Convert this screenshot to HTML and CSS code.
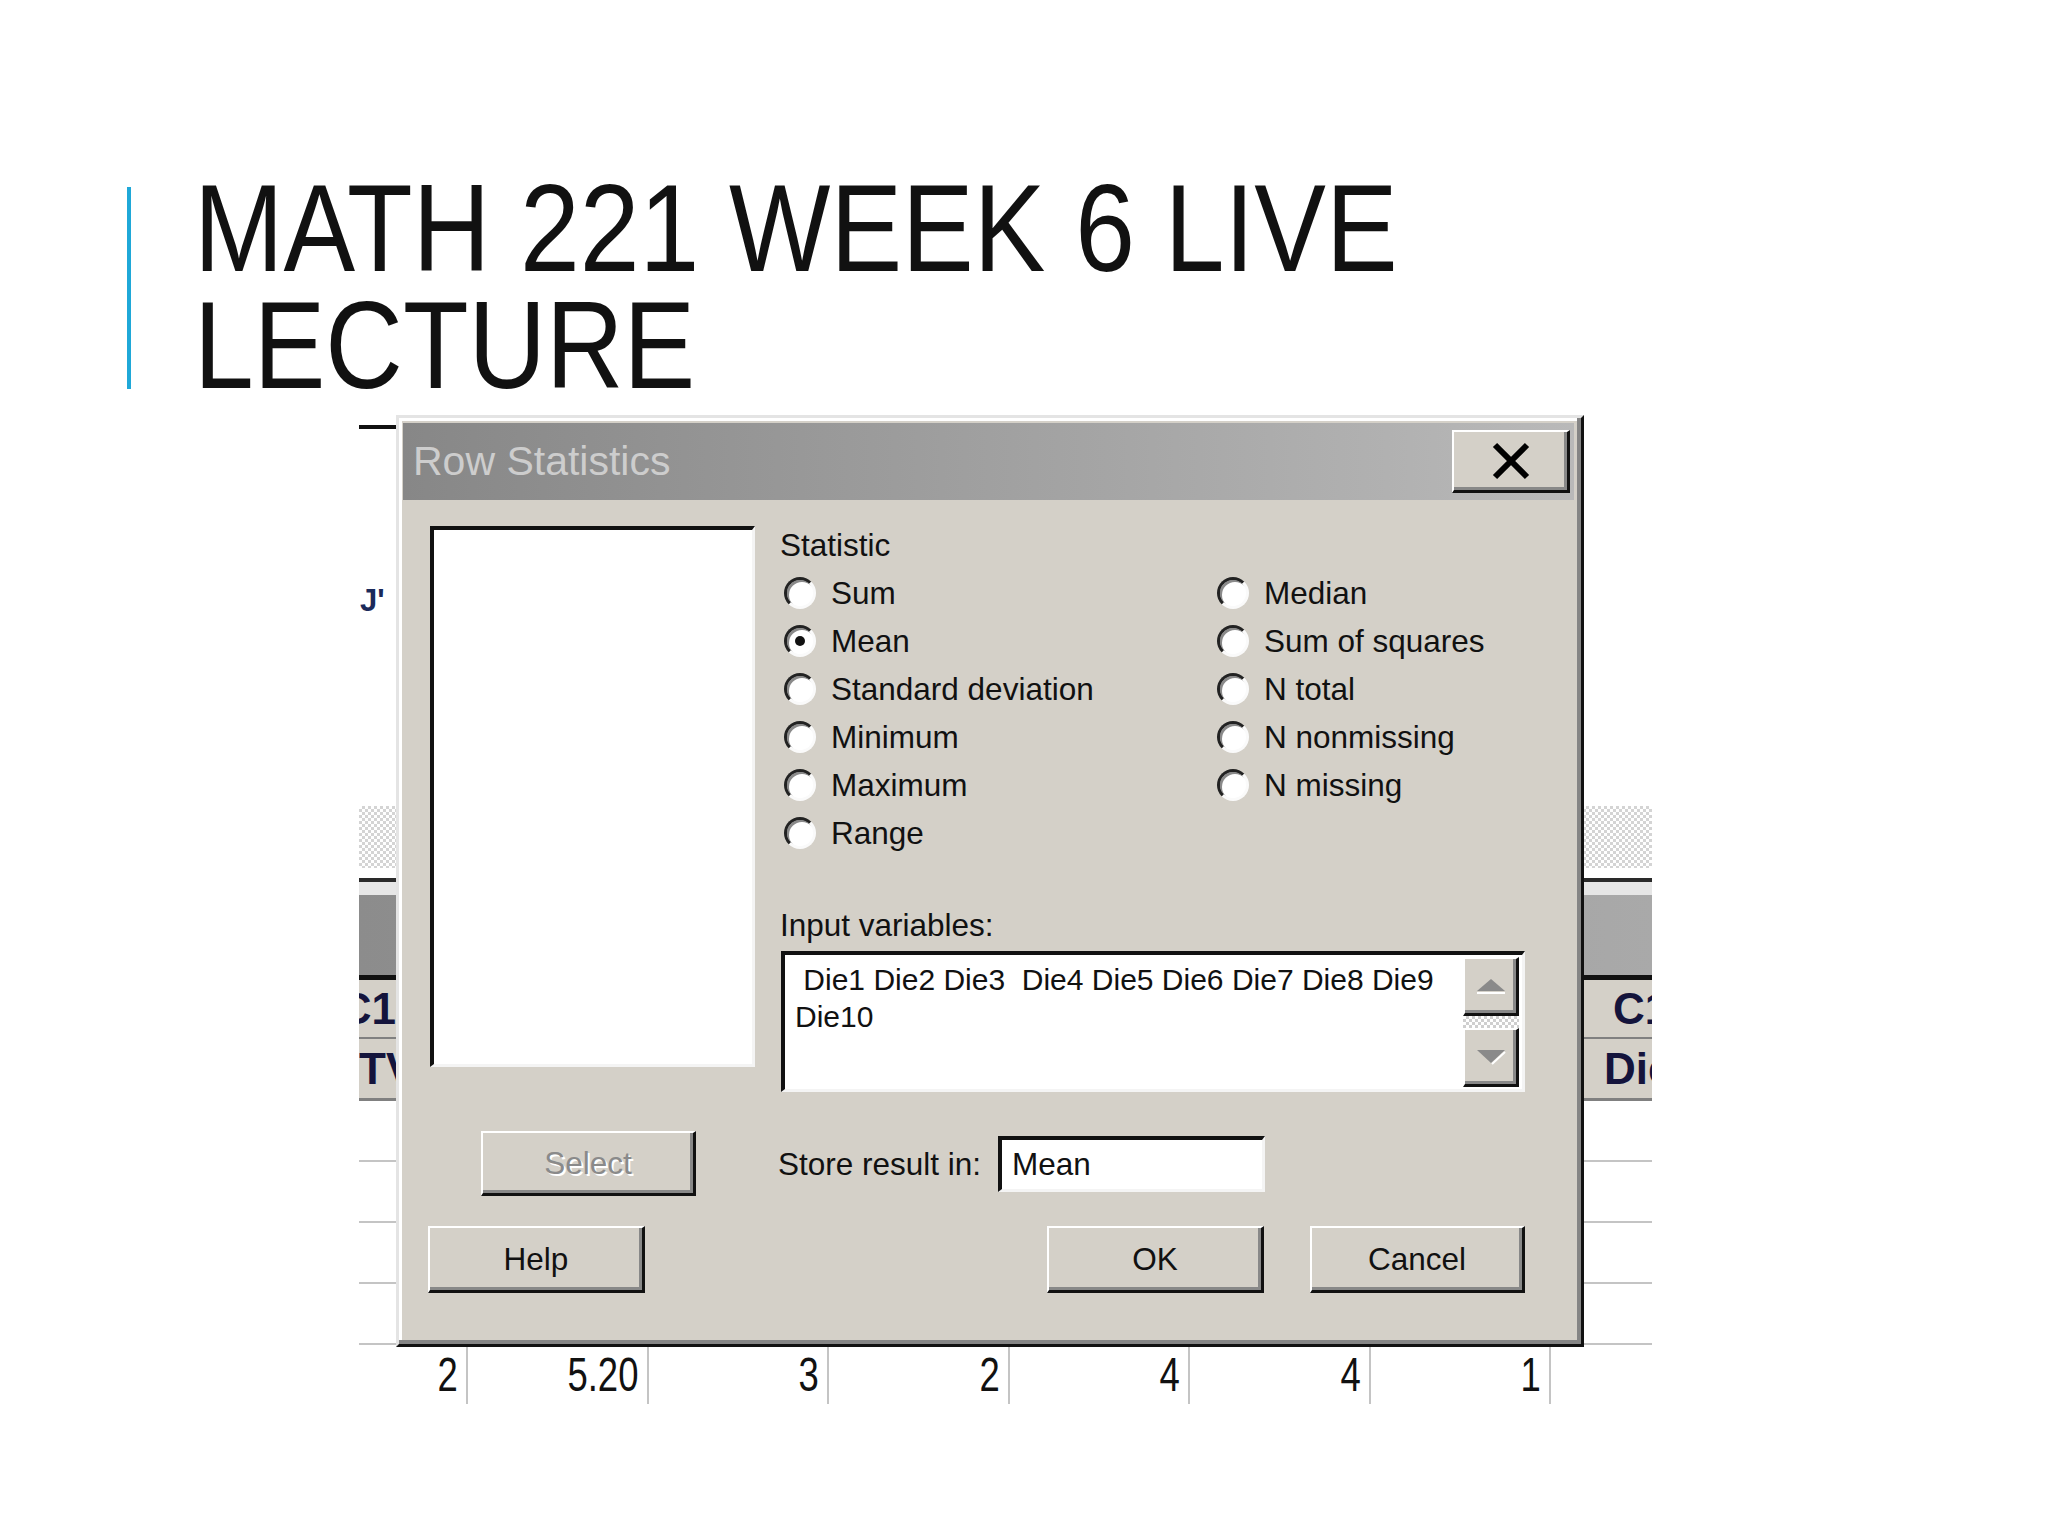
FILE: index.html
```html
<!DOCTYPE html>
<html lang="en">
<head>
    <meta charset="UTF-8">
    <title>MATH 221 Week 6 Live Lecture</title>
    <link rel="stylesheet" href="styles.css">
</head>
<body>
<div class="slide">
    <header class="title-block">
        <div class="accent"></div>
        <h1>MATH 221 WEEK 6 LIVE<br>LECTURE</h1>
    </header>

    <div class="shot">
        <!-- worksheet behind the dialog -->
        <div class="ws">
            <div class="ws-top">
                <div class="ws-rule"></div>
                <div class="ws-note">J'</div>
            </div>
            <div class="ws-checker"></div>
            <div class="ws-bar"><div class="ws-bar-fill"></div></div>
            <div class="ws-head ws-head-1"><span class="cell-l">C1</span><span class="cell-r">C1</span></div>
            <div class="ws-head ws-head-2"><span class="cell-l">TV</span><span class="cell-r">Die</span></div>
            <div class="ws-row"></div>
            <div class="ws-row"></div>
            <div class="ws-row"></div>
            <div class="ws-row"></div>
            <div class="ws-data">
                <span><i class="num">2</i></span>
                <span><i class="num">5.20</i></span>
                <span><i class="num">3</i></span>
                <span><i class="num">2</i></span>
                <span><i class="num">4</i></span>
                <span><i class="num">4</i></span>
                <span><i class="num">1</i></span>
            </div>
        </div>

        <!-- Row Statistics dialog -->
        <div class="dialog">
            <div class="dlg-title">
                <span class="dlg-caption">Row Statistics</span>
                <div class="dlg-close">
                    <svg width="40" height="40" viewBox="0 0 40 40"><path d="M4 4 L36 36 M36 4 L4 36" stroke="#000" stroke-width="6" fill="none"/></svg>
                </div>
            </div>
            <div class="dlg-body">
                <div class="dlg-main">
                    <div class="listbox"></div>
                    <div class="dlg-panel">
                        <div class="label label-stat">Statistic</div>
                        <div class="radios">
                            <div class="radio-item"><span class="radio"></span>Sum</div>
                            <div class="radio-item"><span class="radio checked"></span>Mean</div>
                            <div class="radio-item"><span class="radio"></span>Standard deviation</div>
                            <div class="radio-item"><span class="radio"></span>Minimum</div>
                            <div class="radio-item"><span class="radio"></span>Maximum</div>
                            <div class="radio-item"><span class="radio"></span>Range</div>
                            <div class="radio-item"><span class="radio"></span>Median</div>
                            <div class="radio-item"><span class="radio"></span>Sum of squares</div>
                            <div class="radio-item"><span class="radio"></span>N total</div>
                            <div class="radio-item"><span class="radio"></span>N nonmissing</div>
                            <div class="radio-item"><span class="radio"></span>N missing</div>
                        </div>
                        <div class="label label-input">Input variables:</div>
                        <div class="varbox">
                            <div class="varbox-text"> Die1 Die2 Die3  Die4 Die5 Die6 Die7 Die8 Die9
Die10</div>
                            <div class="vscroll">
                                <div class="sbtn">
                                    <svg width="32" height="20" viewBox="0 0 32 20"><polygon points="16,3 30,15 2,15" fill="#8a8a8a"/><rect x="2" y="16" width="28" height="2" fill="#fff"/></svg>
                                </div>
                                <div class="strack"></div>
                                <div class="sbtn">
                                    <svg width="32" height="20" viewBox="0 0 32 20"><polygon points="2,3 30,3 16,16" fill="#8a8a8a"/><path d="M17 17 L30 5" stroke="#fff" stroke-width="2"/></svg>
                                </div>
                            </div>
                        </div>
                    </div>
                </div>

                <div class="dlg-row dlg-row-store">
                    <div class="select-cell"><div class="btn btn-select">Select</div></div>
                    <span class="label">Store result in:</span>
                    <div class="textbox">Mean</div>
                </div>

                <div class="dlg-row dlg-row-actions">
                    <div class="btn btn-help">Help</div>
                    <div class="btn-group">
                        <div class="btn btn-ok">OK</div>
                        <div class="btn btn-cancel">Cancel</div>
                    </div>
                </div>
            </div>
        </div>
    </div>
</div>
</body>
</html>
```

FILE: styles.css
```css
body {
    margin: 0;
    background: #ffffff;
    font-family: "Liberation Sans", Arial, sans-serif;
}
.slide {
    width: 2048px;
    height: 1536px;
    overflow: hidden;
}

/* Slide title */
.title-block {
    display: flex;
    align-items: flex-start;
    padding: 170px 0 0 127px;
    height: 222px;
}
.accent {
    width: 4px;
    height: 202px;
    margin-top: 17px;
    background: #1fa8d8;
}
.title-block h1 {
    margin: 0 0 0 63px;
    font-size: 124px;
    line-height: 117px;
    font-weight: normal;
    color: #111111;
    white-space: nowrap;
    transform: scaleX(0.866); /* condensed heading face */
    transform-origin: left top;
}

/* Screenshot area */
.shot {
    margin-left: 359px;
    width: 1293px;
    height: 1012px;
    position: relative;
}
.ws {
    height: 100%;
    overflow: hidden;
    background: #ffffff;
}
.ws-top {
    height: 414px;
    box-sizing: border-box;
    padding-top: 33px;
}
.ws-rule {
    width: 37px;
    height: 4px;
    background: #111111;
}
.ws-note {
    margin-top: 157px;
    padding-left: 1px;
    font-size: 31px;
    line-height: 30px;
    font-weight: bold;
    color: #1b2a5a;
}
.ws-checker {
    height: 62px;
    background: repeating-conic-gradient(#d4d4d4 0 25%, #ffffff 0 50%) 0 0 / 6px 6px;
}
.ws-bar {
    margin-top: 10px;
    padding-top: 13px;
    border-top: 4px solid #2a2a2a;
    border-bottom: 5px solid #111111;
    background: #e6e6e6;
}
.ws-bar-fill {
    height: 80px;
    background: linear-gradient(90deg, #8c8c8c, #a9a9a9);
}
.ws-head {
    display: flex;
    justify-content: space-between;
    background: #d4d0c8;
    font-size: 44px;
    font-weight: bold;
    color: #14143c;
}
.ws-head-1 {
    height: 57px;
    border-bottom: 2px solid #808080;
}
.ws-head-2 {
    height: 59px;
    border-bottom: 3px solid #808080;
}
.cell-l,
.cell-r {
    display: flex;
    align-items: center;
    overflow: hidden;
    white-space: nowrap;
    box-sizing: border-box;
}
.cell-l {
    width: 37px;
}
.cell-r {
    width: 68px;
}
.ws-head-1 .cell-l {
    justify-content: flex-end;
    padding-right: 0;
}
.ws-head-1 .cell-r {
    padding-left: 29px;
}
.ws-head-2 .cell-r {
    padding-left: 20px;
}
.ws-row {
    height: 59px;
    border-bottom: 2px solid #c4c4c4;
}
.ws-data {
    display: flex;
    height: 59px;
    font-size: 48px;
    color: #111111;
}
.ws-data span {
    flex-shrink: 0;
    width: 180.5px;
    box-sizing: border-box;
    border-right: 2px solid #c4c4c4;
    padding-right: 8px;
    text-align: right;
    line-height: 59px;
}
.ws-data span:first-child {
    width: 109px;
}
.num {
    display: inline-block;
    font-style: normal;
    transform: scaleX(0.76);
    transform-origin: right center;
}

/* Dialog window */
.dialog {
    position: absolute;
    left: 37px;
    top: 23px;
    width: 1188px;
    height: 932px;
    box-sizing: border-box;
    padding: 5px 7px 0 4px;
    background: #d4d0c8;
    border: 3px solid;
    border-color: #e4e4e4 #111111 #111111 #e4e4e4;
    box-shadow: inset -4px -4px 0 #858585, inset 3px 3px 0 #ffffff;
    font-size: 31.5px;
    color: #111111;
}
.dlg-title {
    height: 77px;
    display: flex;
    align-items: center;
    justify-content: space-between;
    padding: 0 4px 0 10px;
    background: linear-gradient(90deg, #878787, #b9b9b9);
}
.dlg-caption {
    font-size: 41px;
    color: #cdcdcd;
}
.dlg-close {
    width: 118px;
    height: 63px;
    box-sizing: border-box;
    display: flex;
    align-items: center;
    justify-content: center;
    background: #d4d0c8;
    border-style: solid;
    border-width: 2px 3px 3px 2px;
    border-color: #ffffff #111111 #111111 #ffffff;
    box-shadow: inset -3px -3px 0 #888888;
}

.dlg-body {
    padding: 26px 49px 0 27px;
}
.dlg-main {
    display: flex;
    gap: 25px;
    height: 566px;
}
.listbox {
    width: 325px;
    height: 541px;
    box-sizing: border-box;
    background: #ffffff;
    border-style: solid;
    border-width: 4px 3px 3px 4px;
    border-color: #111111 #f4f4f4 #f4f4f4 #111111;
}
.dlg-panel {
    flex: 1;
}
.label {
    line-height: 36px;
}
.label-stat {
    margin-top: 1px;
}
.radios {
    display: grid;
    grid-template-columns: 433px 1fr;
    grid-template-rows: repeat(6, 48px);
    grid-auto-flow: column;
    margin-top: 6px;
    padding-left: 4px;
}
.radio-item {
    display: flex;
    align-items: center;
    gap: 15px;
    white-space: nowrap;
}
.radio {
    position: relative;
    width: 32px;
    height: 32px;
    box-sizing: border-box;
    border-radius: 50%;
    background: #ffffff;
    border: 3px solid;
    border-color: #222222 #fafafa #fafafa #222222;
    box-shadow: inset 2px 2px 0 #8a8a8a;
}
.radio.checked::after {
    content: "";
    position: absolute;
    left: 8px;
    top: 8px;
    width: 10px;
    height: 10px;
    border-radius: 50%;
    background: #111111;
}
.label-input {
    margin-top: 50px;
}
.varbox {
    display: flex;
    height: 141px;
    margin: 8px 0 0 1px;
    box-sizing: border-box;
    background: #ffffff;
    border-style: solid;
    border-width: 4px 3px 3px 4px;
    border-color: #111111 #f4f4f4 #f4f4f4 #111111;
}
.varbox-text {
    flex: 1;
    padding: 6px 0 0 10px;
    font-size: 30px;
    line-height: 37px;
    white-space: pre-wrap;
}
.vscroll {
    width: 56px;
    display: flex;
    flex-direction: column;
    padding: 2px 3px 2px 0;
}
.sbtn {
    height: 59px;
    flex-shrink: 0;
    box-sizing: border-box;
    display: flex;
    align-items: center;
    justify-content: center;
    background: #d4d0c8;
    border-style: solid;
    border-width: 2px 3px 3px 2px;
    border-color: #ffffff #111111 #111111 #ffffff;
    box-shadow: inset -3px -3px 0 #888888;
}
.strack {
    flex: 1;
    background: repeating-conic-gradient(#cfcfcf 0 25%, #ffffff 0 50%) 0 0 / 6px 6px;
}

.dlg-row {
    display: flex;
    align-items: center;
}
.dlg-row-store {
    margin-top: 39px;
    height: 65px;
}
.select-cell {
    width: 325px;
    margin-right: 23px;
}
.btn {
    box-sizing: border-box;
    display: flex;
    align-items: center;
    justify-content: center;
    background: #d4d0c8;
    border-style: solid;
    border-width: 2px 3px 3px 2px;
    border-color: #ffffff #111111 #111111 #ffffff;
    box-shadow: inset -3px -3px 0 #888888;
    width: 217px;
    height: 67px;
}
.btn-select {
    width: 215px;
    height: 65px;
    margin-left: 51px;
    color: #8a8a8a;
    text-shadow: 2px 2px 0 #ffffff;
}
.textbox {
    margin-left: 17px;
    width: 267px;
    height: 56px;
    box-sizing: border-box;
    display: flex;
    align-items: center;
    padding-left: 10px;
    background: #ffffff;
    border-style: solid;
    border-width: 4px 3px 3px 4px;
    border-color: #111111 #f4f4f4 #f4f4f4 #111111;
}
.dlg-row-actions {
    justify-content: space-between;
    margin-top: 30px;
}
.btn-help {
    margin-left: -2px;
}
.btn-group {
    display: flex;
    gap: 46px;
}
.btn-cancel {
    width: 215px;
}
```
